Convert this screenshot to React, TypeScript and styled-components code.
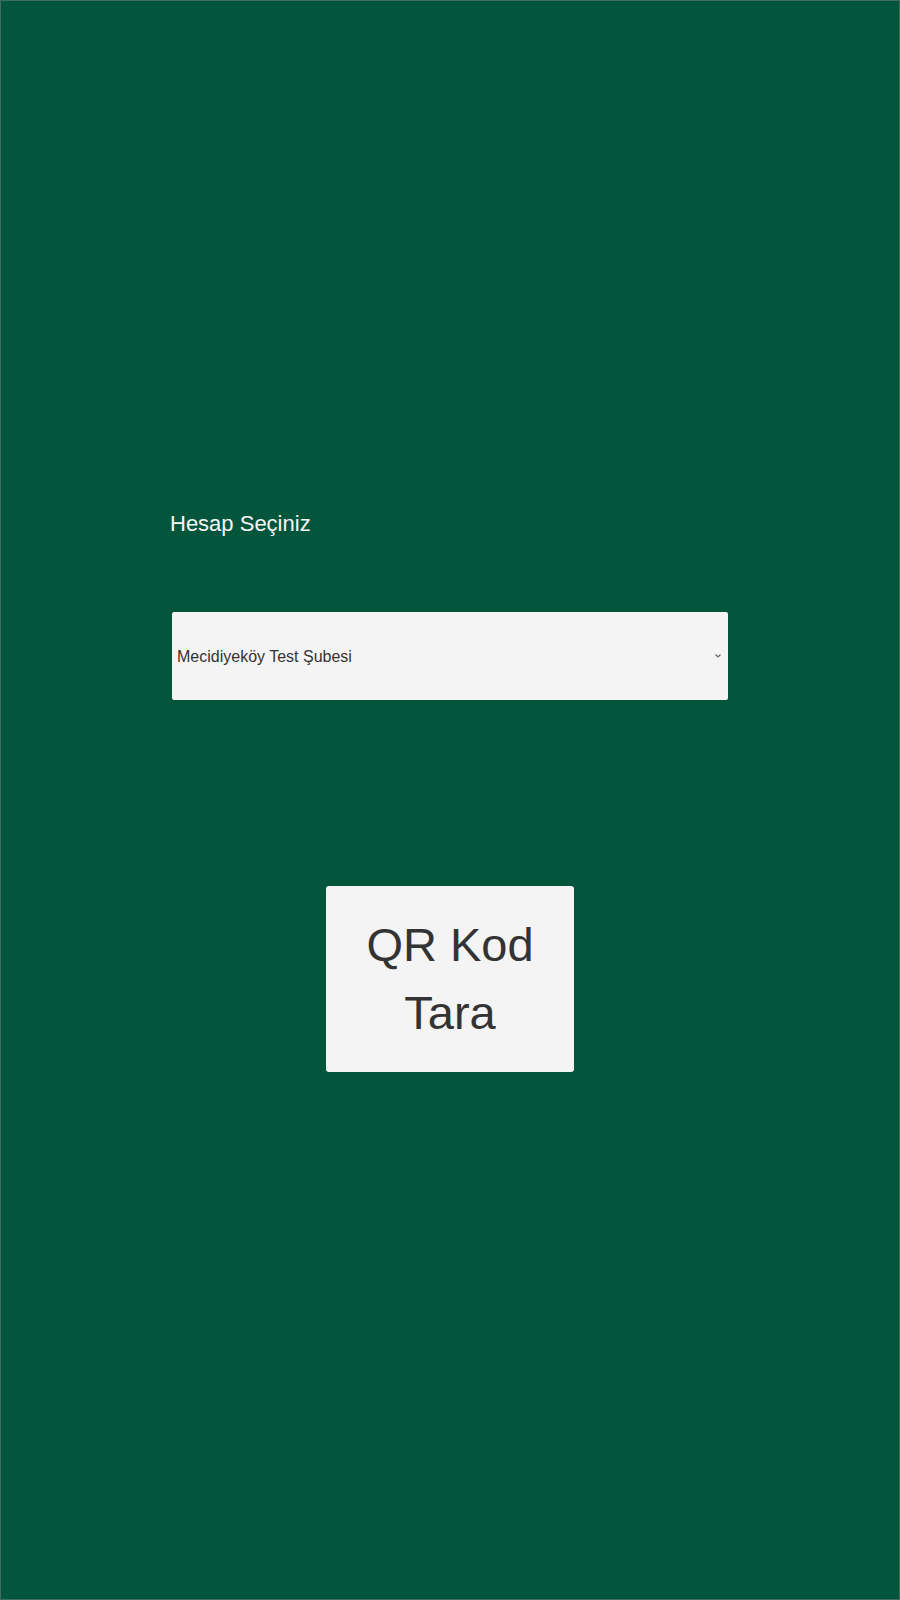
import React from "react";
import styled, { createGlobalStyle } from "styled-components";

const Global = createGlobalStyle`
  html, body { margin: 0; padding: 0; background: #03553c; }
  * { box-sizing: border-box; }
`;

const Page = styled.div`
  width: 900px;
  height: 1600px;
  background: #03553c;
  border: 1px solid #3d6d62;
  display: flex;
  flex-direction: column;
  align-items: center;
  padding-top: 510px;
  font-family: "Liberation Sans", Arial, sans-serif;
`;

const Form = styled.div`
  width: 556px;
  display: flex;
  flex-direction: column;
  align-items: stretch;
`;

const Label = styled.div`
  color: #f7f7f7;
  font-size: 22px;
  line-height: 25px;
  margin-left: -2px;
`;

const SelectWrap = styled.div`
  position: relative;
  margin-top: 76px;
  height: 88px;
`;

const Select = styled.select`
  appearance: none;
  -webkit-appearance: none;
  width: 100%;
  height: 100%;
  background: #f4f4f4;
  border: none;
  border-radius: 2px;
  padding: 0 0 0 5px;
  font-family: "Liberation Sans", Arial, sans-serif;
  font-size: 16px;
  color: #333;
  outline: none;
`;

const Chevron = styled.svg`
  position: absolute;
  right: 6px;
  top: 41px;
  width: 8px;
  height: 6px;
  pointer-events: none;
`;

const ScanButton = styled.button`
  margin-top: 186px;
  width: 248px;
  height: 186px;
  background: #f4f4f4;
  border: none;
  border-radius: 3px;
  color: #333;
  font-family: "Liberation Sans", Arial, sans-serif;
  font-size: 47px;
  line-height: 68px;
  padding: 0 20px;
  cursor: pointer;
`;

export default function App() {
  return (
    <>
      <Global />
      <Page>
        <Form>
          <Label>Hesap Seçiniz</Label>
          <SelectWrap>
            <Select defaultValue="mecidiyekoy">
              <option value="mecidiyekoy">Mecidiyeköy Test Şubesi</option>
            </Select>
            <Chevron viewBox="0 0 8 6">
              <path d="M1.5 1.5 L4 4 L6.5 1.5" fill="none" stroke="#666" strokeWidth="1.2" />
            </Chevron>
          </SelectWrap>
        </Form>
        <ScanButton>QR Kod Tara</ScanButton>
      </Page>
    </>
  );
}
